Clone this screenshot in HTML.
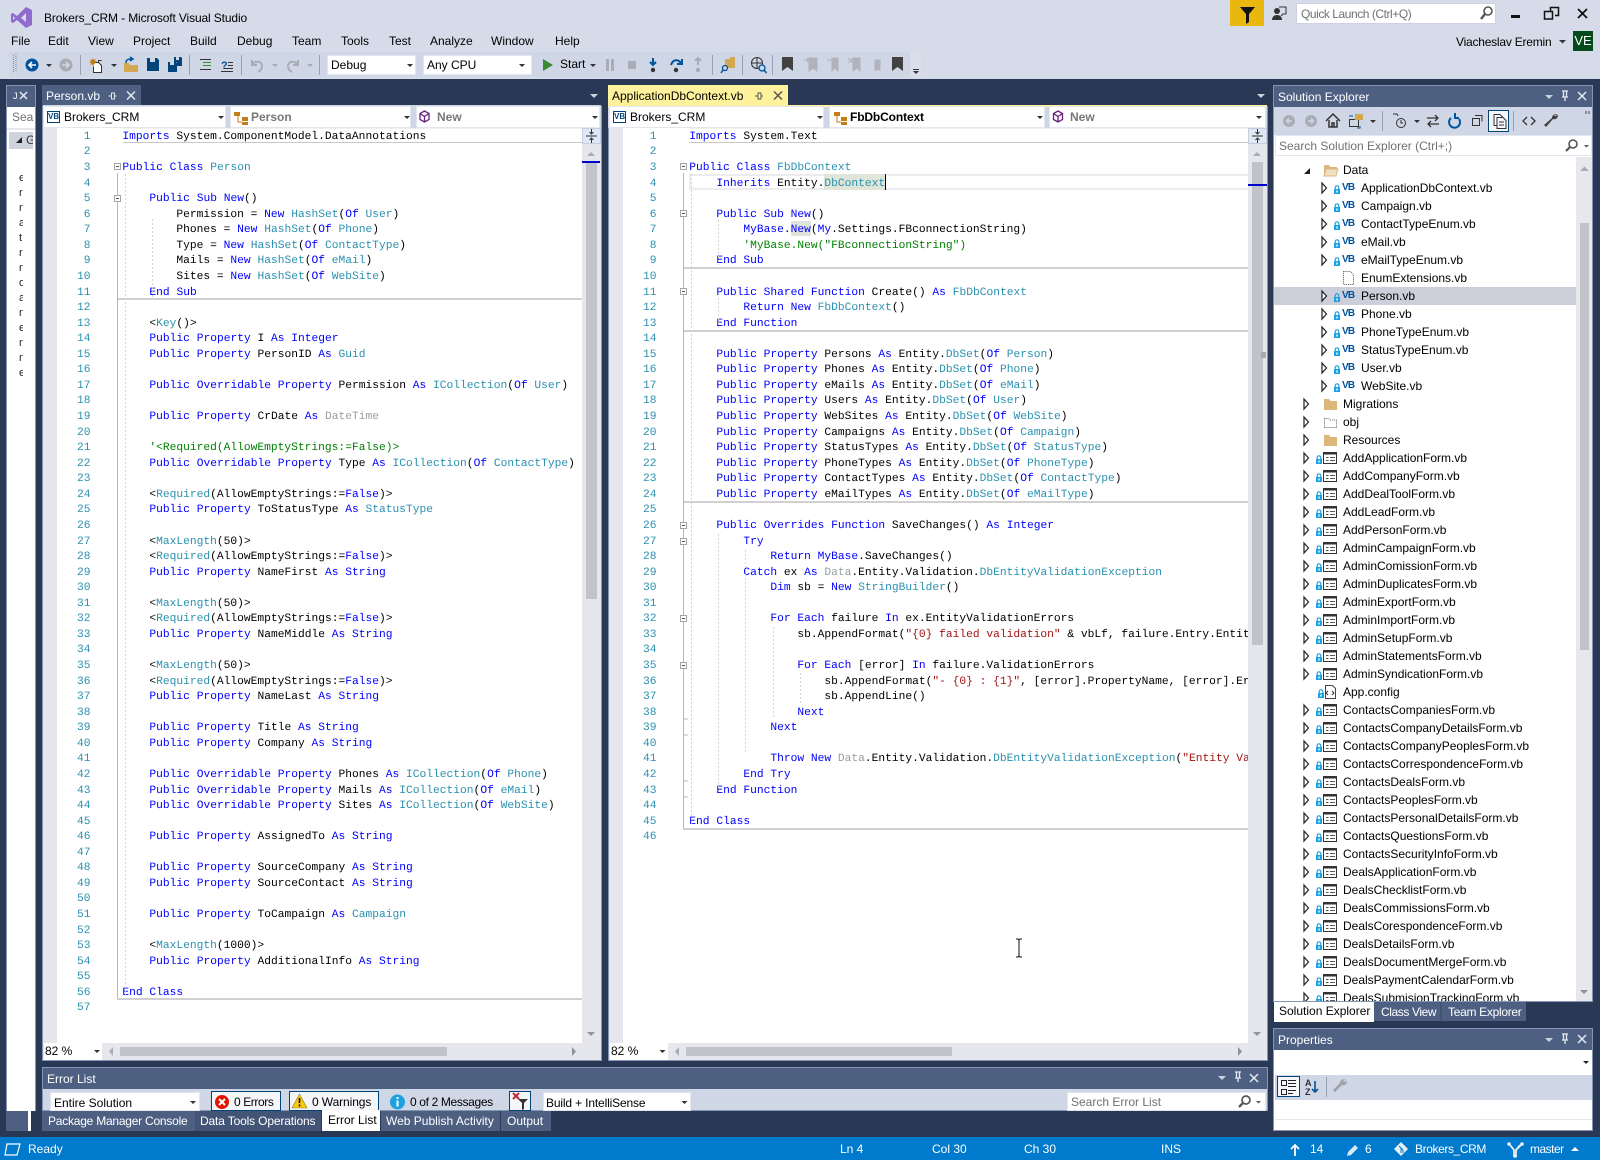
<!DOCTYPE html>
<html lang="en"><head><meta charset="utf-8"><title>Brokers_CRM - Microsoft Visual Studio</title>
<style>
*{box-sizing:border-box}
html,body{margin:0;padding:0;width:1600px;height:1160px;overflow:hidden;background:#293955;font:12px/16px "Liberation Sans",sans-serif;color:#000}
.a{position:absolute}
.t{position:absolute;white-space:nowrap;height:16px;line-height:16px}
.w{color:#fff}
.g{color:#717171}
.c{position:absolute;margin:0;font:11.25px/15.57px "Liberation Mono",monospace;color:#000;white-space:pre;overflow:hidden;text-rendering:geometricPrecision}
.c b{font-weight:normal;color:#00f}
.c i{font-style:normal;color:#2b91af}
.c s{text-decoration:none;color:#a31515}
.c u{text-decoration:none;color:#9aa0a0}
.c em{font-style:normal;color:#008000}
.n{color:#2b91af;text-align:right}
.dd{position:absolute;background:#fff;border:1px solid #e3e6ef}
.r{height:18px;line-height:18px;position:relative;white-space:nowrap}
.r svg{position:absolute;left:0;top:0}
.r1{padding-left:69px}
.r2{padding-left:87px}
.vb{position:absolute;left:68px;top:0;font:bold 10px/18px "Liberation Sans",sans-serif;color:#00539c;letter-spacing:-.8px}
.box{position:absolute;background:#fff;border:1px solid #00447a;font:bold 8px/10px "Liberation Sans",sans-serif;color:#00447a;text-align:center}
</style></head><body>

<!-- chrome -->
<div class="a" style="left:0;top:0;width:1600px;height:79px;background:#d6dbe9"></div>
<div class="a" style="left:9px;top:52px;width:901px;height:25px;background:#cfd6e5"></div>
<div class="a" style="left:910px;top:52px;width:11px;height:25px;background:#d9deea"></div>
<div class="a" style="left:1230px;top:0;width:34px;height:26px;background:#e8b80e"></div>
<div class="a" style="left:1296px;top:3px;width:200px;height:21px;background:#fff;border:1px solid #ccd2e0"></div>
<div class="a" style="left:1573px;top:31px;width:20px;height:20px;background:#054a1d;color:#fff;font-size:13px;line-height:20px;text-align:center">VE</div>

<span class="t" style="left:44px;top:10px;letter-spacing:-.13px">Brokers_CRM - Microsoft Visual Studio</span>
<span class="t" style="left:11px;top:33px">File</span>
<span class="t" style="left:48px;top:33px">Edit</span>
<span class="t" style="left:88px;top:33px">View</span>
<span class="t" style="left:133px;top:33px">Project</span>
<span class="t" style="left:190px;top:33px">Build</span>
<span class="t" style="left:237px;top:33px">Debug</span>
<span class="t" style="left:292px;top:33px">Team</span>
<span class="t" style="left:341px;top:33px">Tools</span>
<span class="t" style="left:389px;top:33px">Test</span>
<span class="t" style="left:430px;top:33px">Analyze</span>
<span class="t" style="left:491px;top:33px">Window</span>
<span class="t" style="left:555px;top:33px">Help</span>
<span class="t g" style="left:1301px;top:6px;letter-spacing:-.45px">Quick Launch (Ctrl+Q)</span>
<span class="t" style="left:1456px;top:34px;letter-spacing:-.22px">Viacheslav Eremin</span>

<div class="dd" style="left:327px;top:55px;width:89px;height:20px"></div>
<span class="t" style="left:331px;top:57px">Debug</span>
<div class="dd" style="left:423px;top:55px;width:109px;height:20px"></div>
<span class="t" style="left:427px;top:57px">Any CPU</span>
<span class="t" style="left:560px;top:56px">Start</span>

<!-- left tool window -->
<div class="a" style="left:6px;top:85px;width:30px;height:1026px;background:#fff;border:1px solid #8496b5;border-bottom:0"></div>
<div class="a" style="left:7px;top:86px;width:28px;height:21px;background:#4d6082"></div>
<span class="t w" style="left:13px;top:88px;font-size:9px">J</span>
<div class="a" style="left:8px;top:107px;width:26px;height:21px;background:#fff;overflow:hidden;white-space:nowrap;color:#717171;line-height:21px;padding-left:4px">Search</div>
<div class="a" style="left:7px;top:128px;width:28px;height:2px;background:#e6e7ed"></div>
<div class="a" style="left:9px;top:132px;width:24px;height:17px;background:#cfd3de;overflow:hidden;line-height:17px;padding-left:17px;color:#333">G</div>
<pre class="a" style="left:19px;top:171px;width:4px;height:210px;margin:0;overflow:hidden;font:11px/15px 'Liberation Sans',sans-serif;color:#222">e
r
n
a
t
r
n
o
a
n
e
n
n
e</pre>
<div class="a" style="left:6px;top:1111px;width:22px;height:20px;background:#4d6082"></div>
<div class="a" style="left:28px;top:1111px;width:3px;height:20px;background:#fff"></div>

<!-- left editor -->
<div class="a" style="left:42px;top:106px;width:560px;height:955px;background:#e6e7ed;border:1px solid #8496b5;border-top:0"></div>
<div class="a" style="left:42px;top:85px;width:99px;height:21px;background:#4d6082"></div>
<span class="t w" style="left:46px;top:88px">Person.vb</span>
<div class="a" style="left:43px;top:105px;width:558px;height:23px;background:#cfd6e5"></div>
<div class="dd" style="left:43px;top:106px;width:183px;height:22px"></div>
<div class="dd" style="left:230px;top:106px;width:181px;height:22px"></div>
<div class="dd" style="left:416px;top:106px;width:184px;height:22px"></div>
<div class="box" style="left:47px;top:111px;width:13px;height:12px">VB</div>
<span class="t" style="left:64px;top:109px">Brokers_CRM</span>
<span class="t" style="left:251px;top:109px;color:#777;font-weight:bold">Person</span>
<span class="t" style="left:437px;top:109px;color:#777;font-weight:bold">New</span>
<div class="a" style="left:57px;top:128px;width:525px;height:915px;background:#fff"></div>
<div class="a" style="left:123px;top:128px;width:459px;height:15px;border-bottom:1px solid #c8c8c8;border-top:1px solid #f0f0f0"></div>
<div class="a" style="left:117px;top:298px;width:465px;height:2px;background:#d0d0d0"></div>
<div class="a" style="left:117px;top:998px;width:465px;height:2px;background:#d0d0d0"></div>
<div class="dd" style="left:44px;top:1043px;width:58px;height:17px;border:0;line-height:17px;padding-left:1px">82 %</div>
<div class="a" style="left:120px;top:1047px;width:327px;height:9px;background:#c2c3c9"></div>
<div class="a" style="left:586px;top:163px;width:11px;height:436px;background:#c2c3c9"></div>
<div class="a" style="left:582px;top:128px;width:19px;height:16px;background:#e1e8f5;border:1px solid #c5cddf"></div>
<div class="a" style="left:582px;top:161px;width:18px;height:2px;background:#0000c8"></div>

<pre class="c n" style="left:60px;top:129.9px;width:30.5px;height:900px">1
2
3
4
5
6
7
8
9
10
11
12
13
14
15
16
17
18
19
20
21
22
23
24
25
26
27
28
29
30
31
32
33
34
35
36
37
38
39
40
41
42
43
44
45
46
47
48
49
50
51
52
53
54
55
56
57</pre>
<pre class="c" style="left:122.4px;top:129.9px;width:459px;height:900px"><b>Imports</b> System.ComponentModel.DataAnnotations

<b>Public</b> <b>Class</b> <i>Person</i>

    <b>Public</b> <b>Sub</b> <b>New</b>()
        Permission = <b>New</b> <i>HashSet</i>(<b>Of</b> <i>User</i>)
        Phones = <b>New</b> <i>HashSet</i>(<b>Of</b> <i>Phone</i>)
        Type = <b>New</b> <i>HashSet</i>(<b>Of</b> <i>ContactType</i>)
        Mails = <b>New</b> <i>HashSet</i>(<b>Of</b> <i>eMail</i>)
        Sites = <b>New</b> <i>HashSet</i>(<b>Of</b> <i>WebSite</i>)
    <b>End</b> <b>Sub</b>

    &lt;<i>Key</i>()&gt;
    <b>Public</b> <b>Property</b> I <b>As</b> <b>Integer</b>
    <b>Public</b> <b>Property</b> PersonID <b>As</b> <i>Guid</i>

    <b>Public</b> <b>Overridable</b> <b>Property</b> Permission <b>As</b> <i>ICollection</i>(<b>Of</b> <i>User</i>)

    <b>Public</b> <b>Property</b> CrDate <b>As</b> <u>DateTime</u>

    <em>'&lt;Required(AllowEmptyStrings:=False)&gt;</em>
    <b>Public</b> <b>Overridable</b> <b>Property</b> Type <b>As</b> <i>ICollection</i>(<b>Of</b> <i>ContactType</i>)

    &lt;<i>Required</i>(AllowEmptyStrings:=<b>False</b>)&gt;
    <b>Public</b> <b>Property</b> ToStatusType <b>As</b> <i>StatusType</i>

    &lt;<i>MaxLength</i>(50)&gt;
    &lt;<i>Required</i>(AllowEmptyStrings:=<b>False</b>)&gt;
    <b>Public</b> <b>Property</b> NameFirst <b>As</b> <b>String</b>

    &lt;<i>MaxLength</i>(50)&gt;
    &lt;<i>Required</i>(AllowEmptyStrings:=<b>False</b>)&gt;
    <b>Public</b> <b>Property</b> NameMiddle <b>As</b> <b>String</b>

    &lt;<i>MaxLength</i>(50)&gt;
    &lt;<i>Required</i>(AllowEmptyStrings:=<b>False</b>)&gt;
    <b>Public</b> <b>Property</b> NameLast <b>As</b> <b>String</b>

    <b>Public</b> <b>Property</b> Title <b>As</b> <b>String</b>
    <b>Public</b> <b>Property</b> Company <b>As</b> <b>String</b>

    <b>Public</b> <b>Overridable</b> <b>Property</b> Phones <b>As</b> <i>ICollection</i>(<b>Of</b> <i>Phone</i>)
    <b>Public</b> <b>Overridable</b> <b>Property</b> Mails <b>As</b> <i>ICollection</i>(<b>Of</b> <i>eMail</i>)
    <b>Public</b> <b>Overridable</b> <b>Property</b> Sites <b>As</b> <i>ICollection</i>(<b>Of</b> <i>WebSite</i>)

    <b>Public</b> <b>Property</b> AssignedTo <b>As</b> <b>String</b>

    <b>Public</b> <b>Property</b> SourceCompany <b>As</b> <b>String</b>
    <b>Public</b> <b>Property</b> SourceContact <b>As</b> <b>String</b>

    <b>Public</b> <b>Property</b> ToCampaign <b>As</b> <i>Campaign</i>

    &lt;<i>MaxLength</i>(1000)&gt;
    <b>Public</b> <b>Property</b> AdditionalInfo <b>As</b> <b>String</b>

<b>End</b> <b>Class</b>
</pre>

<!-- right editor -->
<div class="a" style="left:608px;top:106px;width:660px;height:955px;background:#e6e7ed;border:1px solid #8496b5;border-top:0"></div>
<div class="a" style="left:608px;top:85px;width:180px;height:20px;background:#fff29d"></div>
<span class="t" style="left:612px;top:88px">ApplicationDbContext.vb</span>
<div class="a" style="left:608px;top:105px;width:659px;height:23px;background:#cfd6e5;border-top:2px solid #fff29d"></div>
<div class="dd" style="left:609px;top:106px;width:215px;height:22px"></div>
<div class="dd" style="left:829px;top:106px;width:216px;height:22px"></div>
<div class="dd" style="left:1049px;top:106px;width:217px;height:22px"></div>
<div class="box" style="left:613px;top:111px;width:13px;height:12px">VB</div>
<span class="t" style="left:630px;top:109px">Brokers_CRM</span>
<span class="t" style="left:850px;top:109px;font-weight:bold;letter-spacing:-.13px">FbDbContext</span>
<span class="t" style="left:1070px;top:109px;color:#777;font-weight:bold">New</span>
<div class="a" style="left:623px;top:128px;width:625px;height:915px;background:#fff"></div>
<div class="a" style="left:689px;top:128px;width:559px;height:15px;border-bottom:1px solid #c8c8c8;border-top:1px solid #f0f0f0"></div>
<div class="a" style="left:689px;top:174px;width:559px;height:16px;border:2px solid #ececf0;border-right:0"></div>
<div class="a" style="left:824px;top:174px;width:61px;height:15.6px;background:#dfe5d8"></div>
<div class="a" style="left:790.5px;top:220.6px;width:20.5px;height:15.6px;background:#dfe5d8"></div>
<div class="a" style="left:885px;top:174px;width:1px;height:16px;background:#000"></div>
<div class="a" style="left:683px;top:267px;width:565px;height:2px;background:#d0d0d0"></div>
<div class="a" style="left:683px;top:330px;width:565px;height:2px;background:#d0d0d0"></div>
<div class="a" style="left:683px;top:501px;width:565px;height:2px;background:#d0d0d0"></div>
<div class="a" style="left:683px;top:828px;width:565px;height:2px;background:#d0d0d0"></div>
<div class="dd" style="left:610px;top:1043px;width:58px;height:17px;border:0;line-height:17px;padding-left:1px">82 %</div>
<div class="a" style="left:686px;top:1047px;width:266px;height:9px;background:#c2c3c9"></div>
<div class="a" style="left:1252px;top:162px;width:11px;height:483px;background:#c2c3c9"></div>
<div class="a" style="left:1248px;top:128px;width:19px;height:16px;background:#e1e8f5;border:1px solid #c5cddf"></div>
<div class="a" style="left:1248px;top:184px;width:19px;height:2px;background:#0000c8"></div>
<div class="a" style="left:1261px;top:352px;width:5px;height:6px;background:#a8a8ae"></div>

<pre class="c n" style="left:626px;top:129.9px;width:30.5px;height:730px">1
2
3
4
5
6
7
8
9
10
11
12
13
14
15
16
17
18
19
20
21
22
23
24
25
26
27
28
29
30
31
32
33
34
35
36
37
38
39
40
41
42
43
44
45
46</pre>
<pre class="c" style="left:689.3px;top:129.9px;width:558.7px;height:730px"><b>Imports</b> System.Text

<b>Public</b> <b>Class</b> <i>FbDbContext</i>
    <b>Inherits</b> Entity.<i>DbContext</i>

    <b>Public</b> <b>Sub</b> <b>New</b>()
        <b>MyBase</b>.<b>New</b>(<b>My</b>.Settings.FBconnectionString)
        <em>'MyBase.New("FBconnectionString")</em>
    <b>End</b> <b>Sub</b>

    <b>Public</b> <b>Shared</b> <b>Function</b> Create() <b>As</b> <i>FbDbContext</i>
        <b>Return</b> <b>New</b> <i>FbDbContext</i>()
    <b>End</b> <b>Function</b>

    <b>Public</b> <b>Property</b> Persons <b>As</b> Entity.<i>DbSet</i>(<b>Of</b> <i>Person</i>)
    <b>Public</b> <b>Property</b> Phones <b>As</b> Entity.<i>DbSet</i>(<b>Of</b> <i>Phone</i>)
    <b>Public</b> <b>Property</b> eMails <b>As</b> Entity.<i>DbSet</i>(<b>Of</b> <i>eMail</i>)
    <b>Public</b> <b>Property</b> Users <b>As</b> Entity.<i>DbSet</i>(<b>Of</b> <i>User</i>)
    <b>Public</b> <b>Property</b> WebSites <b>As</b> Entity.<i>DbSet</i>(<b>Of</b> <i>WebSite</i>)
    <b>Public</b> <b>Property</b> Campaigns <b>As</b> Entity.<i>DbSet</i>(<b>Of</b> <i>Campaign</i>)
    <b>Public</b> <b>Property</b> StatusTypes <b>As</b> Entity.<i>DbSet</i>(<b>Of</b> <i>StatusType</i>)
    <b>Public</b> <b>Property</b> PhoneTypes <b>As</b> Entity.<i>DbSet</i>(<b>Of</b> <i>PhoneType</i>)
    <b>Public</b> <b>Property</b> ContactTypes <b>As</b> Entity.<i>DbSet</i>(<b>Of</b> <i>ContactType</i>)
    <b>Public</b> <b>Property</b> eMailTypes <b>As</b> Entity.<i>DbSet</i>(<b>Of</b> <i>eMailType</i>)

    <b>Public</b> <b>Overrides</b> <b>Function</b> SaveChanges() <b>As</b> <b>Integer</b>
        <b>Try</b>
            <b>Return</b> <b>MyBase</b>.SaveChanges()
        <b>Catch</b> ex <b>As</b> <u>Data</u>.Entity.Validation.<i>DbEntityValidationException</i>
            <b>Dim</b> sb = <b>New</b> <i>StringBuilder</i>()

            <b>For</b> <b>Each</b> failure <b>In</b> ex.EntityValidationErrors
                sb.AppendFormat(<s>"{0} failed validation"</s> &amp; vbLf, failure.Entry.Entity.GetType().Name)

                <b>For</b> <b>Each</b> [error] <b>In</b> failure.ValidationErrors
                    sb.AppendFormat(<s>"- {0} : {1}"</s>, [error].PropertyName, [error].ErrorMessage)
                    sb.AppendLine()
                <b>Next</b>
            <b>Next</b>

            <b>Throw</b> <b>New</b> <u>Data</u>.Entity.Validation.<i>DbEntityValidationException</i>(<s>"Entity Validation Failed"</s>)
        <b>End</b> <b>Try</b>
    <b>End</b> <b>Function</b>

<b>End</b> <b>Class</b>
</pre>

<!-- solution explorer -->
<div class="a" style="left:1273px;top:85px;width:320px;height:917px;background:#fff;border:1px solid #8496b5"></div>
<div class="a" style="left:1274px;top:86px;width:318px;height:21px;background:#4d6082"></div>
<span class="t w" style="left:1278px;top:89px">Solution Explorer</span>
<div class="a" style="left:1274px;top:107px;width:318px;height:28px;background:#cfd6e5"></div>
<div class="a" style="left:1488px;top:110px;width:21px;height:22px;background:#f5f6fa;border:1px solid #00447a"></div>
<div class="a" style="left:1275px;top:135px;width:317px;height:21px;background:#fff;border:1px solid #e3e6ef"></div>
<span class="t g" style="left:1279px;top:138px">Search Solution Explorer (Ctrl+;)</span>
<div class="a" style="left:1274px;top:287px;width:302px;height:18px;background:#ccced9"></div>
<div class="a" style="left:1576px;top:157px;width:16px;height:844px;background:#e8e8ec"></div>
<div class="a" style="left:1580px;top:223px;width:9px;height:427px;background:#c2c3c9"></div>

<svg width="0" height="0" style="position:absolute">
<defs>
<path id="ar" d="M0 0l4.5 5L0 10z" fill="#fff" stroke="#222" stroke-width="1.2"/>
<g id="lk"><path d="M1.2 4V2.6a1.8 1.8 0 0 1 3.6 0V4" fill="none" stroke="#1ba1e2" stroke-width="1.2"/><rect x="0" y="4" width="6" height="5" fill="#1ba1e2"/><rect x="2.3" y="5.5" width="1.4" height="2" fill="#fff"/></g>
<g id="a2"><use href="#ar" x="48" y="4"/><use href="#lk" x="60" y="6"/></g>
<g id="a1"><use href="#ar" x="30" y="4"/><use href="#lk" x="42" y="6"/><rect x="49.5" y="3.5" width="13" height="11" fill="#fff" stroke="#333"/><rect x="49.5" y="3.5" width="13" height="2" fill="#333"/><path d="M52 8.5h2.5M56 8.5h5M52 11.5h2.5M56 11.5h5" stroke="#555"/></g>
<g id="fo"><path d="M50 4h5l1.5 2H63v9H50z" fill="#dcb67a"/></g>
</defs></svg>

<div class="a" style="left:1274px;top:161px;width:302px;height:840px;overflow:hidden">
<div class="r r1"><svg width="90" height="18"><path d="M30 13l6-6v6z" fill="#222"/><path d="M50 4h5l1.5 2H63v2H52l-2 6z" fill="#dcb67a"/><path d="M52 8h12l-2 7H50z" fill="#efe0c4" stroke="#dcb67a"/></svg>Data</div>
<div class="r r2"><svg width="90" height="18"><use href="#a2"/></svg><b class="vb">VB</b>ApplicationDbContext.vb</div>
<div class="r r2"><svg width="90" height="18"><use href="#a2"/></svg><b class="vb">VB</b>Campaign.vb</div>
<div class="r r2"><svg width="90" height="18"><use href="#a2"/></svg><b class="vb">VB</b>ContactTypeEnum.vb</div>
<div class="r r2"><svg width="90" height="18"><use href="#a2"/></svg><b class="vb">VB</b>eMail.vb</div>
<div class="r r2"><svg width="90" height="18"><use href="#a2"/></svg><b class="vb">VB</b>eMailTypeEnum.vb</div>
<div class="r r2"><svg width="90" height="18"><path d="M69.5 2.5h7l3 3v10h-10z" fill="#fff" stroke="#555" stroke-dasharray="1 1"/></svg>EnumExtensions.vb</div>
<div class="r r2"><svg width="90" height="18"><use href="#a2"/></svg><b class="vb">VB</b>Person.vb</div>
<div class="r r2"><svg width="90" height="18"><use href="#a2"/></svg><b class="vb">VB</b>Phone.vb</div>
<div class="r r2"><svg width="90" height="18"><use href="#a2"/></svg><b class="vb">VB</b>PhoneTypeEnum.vb</div>
<div class="r r2"><svg width="90" height="18"><use href="#a2"/></svg><b class="vb">VB</b>StatusTypeEnum.vb</div>
<div class="r r2"><svg width="90" height="18"><use href="#a2"/></svg><b class="vb">VB</b>User.vb</div>
<div class="r r2"><svg width="90" height="18"><use href="#a2"/></svg><b class="vb">VB</b>WebSite.vb</div>
<div class="r r1"><svg width="90" height="18"><use href="#ar" x="30" y="4"/><use href="#fo"/></svg>Migrations</div>
<div class="r r1"><svg width="90" height="18"><use href="#ar" x="30" y="4"/><path d="M50.5 5.5h4l1.500 1.500h6.500v7.500h-12z" fill="#fff" stroke="#666" stroke-dasharray="1 1"/></svg>obj</div>
<div class="r r1"><svg width="90" height="18"><use href="#ar" x="30" y="4"/><use href="#fo"/></svg>Resources</div>
<div class="r r1"><svg width="90" height="18"><use href="#a1"/></svg>AddApplicationForm.vb</div>
<div class="r r1"><svg width="90" height="18"><use href="#a1"/></svg>AddCompanyForm.vb</div>
<div class="r r1"><svg width="90" height="18"><use href="#a1"/></svg>AddDealToolForm.vb</div>
<div class="r r1"><svg width="90" height="18"><use href="#a1"/></svg>AddLeadForm.vb</div>
<div class="r r1"><svg width="90" height="18"><use href="#a1"/></svg>AddPersonForm.vb</div>
<div class="r r1"><svg width="90" height="18"><use href="#a1"/></svg>AdminCampaignForm.vb</div>
<div class="r r1"><svg width="90" height="18"><use href="#a1"/></svg>AdminComissionForm.vb</div>
<div class="r r1"><svg width="90" height="18"><use href="#a1"/></svg>AdminDuplicatesForm.vb</div>
<div class="r r1"><svg width="90" height="18"><use href="#a1"/></svg>AdminExportForm.vb</div>
<div class="r r1"><svg width="90" height="18"><use href="#a1"/></svg>AdminImportForm.vb</div>
<div class="r r1"><svg width="90" height="18"><use href="#a1"/></svg>AdminSetupForm.vb</div>
<div class="r r1"><svg width="90" height="18"><use href="#a1"/></svg>AdminStatementsForm.vb</div>
<div class="r r1"><svg width="90" height="18"><use href="#a1"/></svg>AdminSyndicationForm.vb</div>
<div class="r r1"><svg width="90" height="18"><use href="#lk" x="44" y="6"/><path d="M51.500 2.500h7l3 3v10h-10z" fill="#fff" stroke="#444"/><path d="M54 8l-2 2 2 2M58 8l2 2-2 2" fill="none" stroke="#333"/></svg>App.config</div>
<div class="r r1"><svg width="90" height="18"><use href="#a1"/></svg>ContactsCompaniesForm.vb</div>
<div class="r r1"><svg width="90" height="18"><use href="#a1"/></svg>ContactsCompanyDetailsForm.vb</div>
<div class="r r1"><svg width="90" height="18"><use href="#a1"/></svg>ContactsCompanyPeoplesForm.vb</div>
<div class="r r1"><svg width="90" height="18"><use href="#a1"/></svg>ContactsCorrespondenceForm.vb</div>
<div class="r r1"><svg width="90" height="18"><use href="#a1"/></svg>ContactsDealsForm.vb</div>
<div class="r r1"><svg width="90" height="18"><use href="#a1"/></svg>ContactsPeoplesForm.vb</div>
<div class="r r1"><svg width="90" height="18"><use href="#a1"/></svg>ContactsPersonalDetailsForm.vb</div>
<div class="r r1"><svg width="90" height="18"><use href="#a1"/></svg>ContactsQuestionsForm.vb</div>
<div class="r r1"><svg width="90" height="18"><use href="#a1"/></svg>ContactsSecurityInfoForm.vb</div>
<div class="r r1"><svg width="90" height="18"><use href="#a1"/></svg>DealsApplicationForm.vb</div>
<div class="r r1"><svg width="90" height="18"><use href="#a1"/></svg>DealsChecklistForm.vb</div>
<div class="r r1"><svg width="90" height="18"><use href="#a1"/></svg>DealsCommissionsForm.vb</div>
<div class="r r1"><svg width="90" height="18"><use href="#a1"/></svg>DealsCorespondenceForm.vb</div>
<div class="r r1"><svg width="90" height="18"><use href="#a1"/></svg>DealsDetailsForm.vb</div>
<div class="r r1"><svg width="90" height="18"><use href="#a1"/></svg>DealsDocumentMergeForm.vb</div>
<div class="r r1"><svg width="90" height="18"><use href="#a1"/></svg>DealsPaymentCalendarForm.vb</div>
<div class="r r1"><svg width="90" height="18"><use href="#a1"/></svg>DealsSubmisionTrackingForm.vb</div>
</div>

<div class="a" style="left:1274px;top:1002px;width:100px;height:20px;background:#fff"></div>
<div class="a" style="left:1374px;top:1002px;width:152px;height:19px;background:#4d6082"></div>
<div class="a" style="left:1440px;top:1002px;width:2px;height:19px;background:#435577"></div>
<span class="t" style="left:1279px;top:1003px">Solution Explorer</span>
<span class="t w" style="left:1381px;top:1004px;letter-spacing:-.4px">Class View</span>
<span class="t w" style="left:1448px;top:1004px;letter-spacing:-.3px">Team Explorer</span>

<!-- properties -->
<div class="a" style="left:1273px;top:1028px;width:320px;height:103px;background:#fff;border:1px solid #8496b5"></div>
<div class="a" style="left:1274px;top:1029px;width:318px;height:21px;background:#4d6082"></div>
<span class="t w" style="left:1278px;top:1032px">Properties</span>
<div class="a" style="left:1275px;top:1075px;width:317px;height:25px;background:#cfd6e5"></div>
<div class="a" style="left:1277px;top:1076px;width:23px;height:21px;background:#f5f6fa;border:1px solid #00447a"></div>
<div class="a" style="left:1275px;top:1119px;width:317px;height:1px;background:#e6e7ed"></div>

<!-- error list -->
<div class="a" style="left:42px;top:1067px;width:1226px;height:44px;background:#cfd6e5;border:1px solid #8496b5"></div>
<div class="a" style="left:43px;top:1068px;width:1224px;height:21px;background:#4d6082"></div>
<span class="t w" style="left:47px;top:1071px">Error List</span>
<div class="dd" style="left:50px;top:1092px;width:150px;height:19px"></div>
<span class="t" style="left:54px;top:1095px">Entire Solution</span>
<div class="a" style="left:211px;top:1091px;width:70px;height:20px;background:#f5f6fa;border:1px solid #00447a"></div>
<span class="t" style="left:234px;top:1094px;letter-spacing:-.4px">0 Errors</span>
<div class="a" style="left:289px;top:1091px;width:90px;height:20px;background:#f5f6fa;border:1px solid #00447a"></div>
<span class="t" style="left:312px;top:1094px;letter-spacing:-.1px">0 Warnings</span>
<span class="t" style="left:410px;top:1094px;letter-spacing:-.35px">0 of 2 Messages</span>
<div class="a" style="left:509px;top:1091px;width:22px;height:20px;background:#f5f6fa;border:1px solid #00447a"></div>
<div class="dd" style="left:543px;top:1092px;width:148px;height:19px"></div>
<span class="t" style="left:546px;top:1095px;letter-spacing:-.15px">Build + IntelliSense</span>
<div class="dd" style="left:1067px;top:1092px;width:199px;height:19px"></div>
<span class="t g" style="left:1071px;top:1094px">Search Error List</span>

<div class="a" style="left:42px;top:1111px;width:153px;height:20px;background:#4d6082"></div>
<div class="a" style="left:195px;top:1111px;width:126px;height:20px;background:#435577"></div>
<div class="a" style="left:322px;top:1110px;width:58px;height:21px;background:#fff"></div>
<div class="a" style="left:381px;top:1111px;width:119px;height:20px;background:#4d6082"></div>
<div class="a" style="left:501px;top:1111px;width:50px;height:20px;background:#4d6082"></div>
<span class="t w" style="left:48px;top:1113px;letter-spacing:-.23px">Package Manager Console</span>
<span class="t w" style="left:200px;top:1113px;letter-spacing:-.15px">Data Tools Operations</span>
<span class="t" style="left:328px;top:1112px">Error List</span>
<span class="t w" style="left:386px;top:1113px">Web Publish Activity</span>
<span class="t w" style="left:507px;top:1113px">Output</span>

<!-- status -->
<div class="a" style="left:0;top:1137px;width:1600px;height:23px;background:#007acc"></div>
<span class="t w" style="left:28px;top:1141px">Ready</span>
<span class="t w" style="left:840px;top:1141px">Ln 4</span>
<span class="t w" style="left:932px;top:1141px">Col 30</span>
<span class="t w" style="left:1024px;top:1141px">Ch 30</span>
<span class="t w" style="left:1161px;top:1141px">INS</span>
<span class="t w" style="left:1310px;top:1141px">14</span>
<span class="t w" style="left:1365px;top:1141px">6</span>
<span class="t w" style="left:1415px;top:1141px;letter-spacing:-.4px">Brokers_CRM</span>
<span class="t w" style="left:1530px;top:1141px;letter-spacing:-.5px">master</span>

<!-- icon layer -->
<svg class="a" style="left:0;top:0" width="1600" height="1160" viewBox="0 0 1600 1160">
<!-- VS logo -->
<path d="M26 7l6 3v15l-6 3-9-8-4 3-2-1V14l2-1 4 3z" fill="#8f6bcb"/><path d="M26 13l-5 5 5 4z" fill="#d6dbe9"/><path d="M13 16v4l2-2z" fill="#d6dbe9"/>
<!-- filter / feedback -->
<path d="M1240 7h15l-6 7v8l-3 2v-10z" fill="#111"/>
<circle cx="1277" cy="11" r="3" fill="#333"/><path d="M1272 20c0-3 2-5 5-5s5 2 5 5z" fill="#333"/><path d="M1279 7h7v7h-3l-2 2" fill="none" stroke="#333"/>
<!-- quick launch magnifier -->
<circle cx="1488" cy="11" r="4" fill="none" stroke="#555" stroke-width="1.6"/><path d="M1485 14l-4 5" stroke="#555" stroke-width="2.4"/>
<!-- window controls -->
<rect x="1511" y="15" width="9" height="3" fill="#111"/>
<path d="M1544.500 11.500h6v-4h8v8h-3.500M1544.500 11.500h8v7.500h-8z" fill="none" stroke="#111" stroke-width="1.500"/>
<path d="M1578 9l9 9M1587 9l-9 9" stroke="#111" stroke-width="1.800"/>
<path d="M1559 40h7l-3.500 3.500z" fill="#333"/>
<!-- toolbar grip -->
<path d="M13.500 55v18M16 54v18" stroke="#7b8499" stroke-width="1" stroke-dasharray="1 1"/>
<!-- back/forward -->
<circle cx="32" cy="65" r="6.500" fill="#00539c"/><path d="M36 65h-6M32 62l-3 3 3 3" stroke="#fff" stroke-width="1.600" fill="none"/>
<path d="M46 64h6l-3 3z" fill="#333"/>
<circle cx="66" cy="65" r="6.500" fill="#a9acb4"/><path d="M62 65h6M66 62l3 3-3 3" stroke="#cfd6e5" stroke-width="1.600" fill="none"/>
<g fill="#9aa2b1"><rect x="80" y="55" width="1" height="20"/><rect x="189" y="55" width="1" height="20"/><rect x="241" y="55" width="1" height="20"/><rect x="319" y="55" width="1" height="20"/><rect x="712" y="55" width="1" height="20"/><rect x="742" y="55" width="1" height="20"/><rect x="772" y="55" width="1" height="20"/></g>
<!-- new project -->
<path d="M93 58l1 2 2-1-1 2 2 1-2 1 1 2-2-1-1 2-1-2-2 1 1-2-2-1 2-1-1-2 2 1z" fill="#c27d1a"/>
<path d="M95.500 62.500h3l3 3v7h-8v-6" fill="#fff" stroke="#333"/><path d="M101.500 60.500h-3v2" fill="none" stroke="#333"/>
<path d="M111 64h6l-3 3z" fill="#333"/>
<!-- open -->
<path d="M124 63h5l1 2h8v7h-14z" fill="#d4a853"/><path d="M126 63c0-4 3-4 6-4M130 57l3 2-3 2" fill="none" stroke="#00539c" stroke-width="1.500"/>
<!-- save -->
<path d="M147 58h10l2 2v11h-12z" fill="#00447a"/><rect x="150" y="58" width="5" height="4" fill="#cfd6e5"/><rect x="149.500" y="65" width="7" height="6" fill="#00447a"/>
<path d="M168 62h8l1 1v9h-9z" fill="#00447a"/><rect x="170" y="62" width="4" height="3" fill="#cfd6e5"/>
<path d="M174 57h7l1 1v8h-5v-4h-3z" fill="#00447a"/><rect x="176" y="57" width="3" height="3" fill="#cfd6e5"/>
<!-- indent/comment -->
<path d="M200 59.500h11M200 69.500h11" stroke="#333"/><path d="M203 62.500h8M203 65.500h8" stroke="#388a34"/>
<text x="221" y="69" font-family="Liberation Sans,sans-serif" font-size="11" font-weight="bold" fill="#00539c">?</text>
<path d="M228 62.500h5M228 65.500h5M224 68.500h9M221 71.500h12" stroke="#333"/>
<!-- undo/redo -->
<path d="M252 60v5h5M252 65c3-5 10-4 10 1 0 3-2 5-4 6" fill="none" stroke="#a9acb4" stroke-width="2"/>
<path d="M272 64h6l-3 3z" fill="#a9acb4"/>
<path d="M298 60v5h-5M298 65c-3-5-10-4-10 1 0 3 2 5 4 6" fill="none" stroke="#a9acb4" stroke-width="2"/>
<path d="M307 64h6l-3 3z" fill="#a9acb4"/>
<!-- combo arrows -->
<path d="M407 64h6l-3 3zM519 64h6l-3 3zM590 64h6l-3 3z" fill="#333"/>
<!-- start/pause/stop -->
<path d="M543 59l10 6-10 6z" fill="#388a34"/>
<path d="M606 59h3v12h-3zM611 59h3v12h-3zM628 61h8v8h-8z" fill="#a9acb4"/>
<!-- step -->
<path d="M653 58v7M650 62l3 3 3-3" stroke="#00539c" stroke-width="2" fill="none"/><circle cx="653" cy="70" r="2.200" fill="#333"/>
<path d="M671 65c2-6 7-6 10-2M682 59v5h-5" stroke="#00539c" stroke-width="2" fill="none"/><circle cx="676" cy="70" r="2.200" fill="#333"/>
<path d="M698 65v-7M695 61l3-3 3 3" stroke="#a9acb4" stroke-width="2" fill="none"/><circle cx="698" cy="70" r="2.200" fill="#a9acb4"/>
<!-- find folder -->
<path d="M725 59h4l2-2h4v11h-10z" fill="#d4a853"/><circle cx="725" cy="68" r="2.500" fill="#cfd6e5" stroke="#00539c" stroke-width="1.300"/><path d="M723 70l-2 3" stroke="#00539c" stroke-width="1.500"/>
<!-- globe find -->
<circle cx="757" cy="63" r="5.500" fill="none" stroke="#333"/><path d="M751.500 63h11M757 57.500v11" stroke="#333"/><circle cx="762" cy="68" r="3" fill="#cfd6e5" stroke="#00539c" stroke-width="1.300"/><path d="M764 70l2.500 3" stroke="#00539c" stroke-width="1.500"/>
<!-- bookmarks -->
<path d="M782 57h11v14l-5.500-4-5.500 4z" fill="#424242"/>
<path d="M892 57h11v14l-5.500-4-5.500 4z" fill="#424242"/>
<path d="M809 58h8v13l-4-3-4 3zM804 60h5M807 58l2 2-2 2M832 58h6v13l-3-3-3 3zM827 60h5M853 58h7v13l-3-3-4 3zM848 58l5 5M853 58l-5 5M875 60h5v10h-5z" fill="#b0b3bb" stroke="#b0b3bb"/>
<path d="M913 69h6v1h-6zM913 71h6l-3 3z" fill="#333"/>
<!-- tab controls left -->
<g stroke="#e6e9f2" fill="none"><path d="M108.500 96h3M111.500 93v6h3v-6zM114.500 96h2"/><path d="M127 91.500l8 8M135 91.500l-8 8" stroke-width="1.500"/><path d="M20 92l7 7M27 92l-7 7" stroke-width="1.500"/></g>
<path d="M590 94h8l-4 4z" fill="#ccd2e0"/>
<path d="M1257 94h8l-4 4z" fill="#ccd2e0"/>
<g stroke="#555" fill="none"><path d="M755 96h3M758 93v6h3v-6zM761 96h2"/><path d="M774 91.500l8 8M782 91.500l-8 8" stroke-width="1.500"/></g>
<!-- G row triangle -->
<path d="M16 143l6-6v6z" fill="#222"/>
<!-- dropdown arrows row -->
<path d="M218 116h6l-3 3zM404 116h6l-3 3zM592 116h6l-3 3zM817 116h6l-3 3zM1037 116h6l-3 3zM1256 116h6l-3 3z" fill="#333"/>
<!-- navbar icons -->
<path d="M234 112h6v4h-6zM242 117h6v4h-6zM242 122h6v3h-6z" fill="#c27d1a"/><path d="M238 116v6h4" stroke="#c27d1a" fill="none"/>
<path d="M840 112h-6v4h6zM841 117h6v4h-6zM841 122h6v3h-6z" fill="#c27d1a"/><path d="M837 116v6h4" stroke="#c27d1a" fill="none"/>
<g fill="none" stroke="#68217a" stroke-width="1.300"><path d="M424.500 111l4.500 2.500v6l-4.500 2.500-4.500-2.500v-6zM424.500 116.500V122M420 113.500l4.500 3 4.500-3"/><path d="M1058 111l4.500 2.500v6l-4.500 2.500-4.500-2.500v-6zM1058 116.500V122M1053.500 113.500l4.500 3 4.500-3"/></g>
<!-- outlining left -->
<path d="M117.500 173v825" fill="none" stroke="#b8b8b8"/>
<path d="M125.500 174v822M152.500 219v78" stroke="#d4d4d4" stroke-dasharray="2 2" fill="none"/>
<g fill="#fff" stroke="#a5a5a5"><rect x="114.500" y="163.500" width="6" height="6"/><rect x="114.500" y="195.500" width="6" height="6"/></g>
<path d="M116 166.500h3M116 198.500h3" stroke="#555"/>
<!-- outlining right -->
<path d="M683.500 173v656" stroke="#b8b8b8" fill="none"/>
<path d="M691.500 174v652M718.500 220v45M718.500 298v31M718.500 534v254M745.500 550v204M773.500 627v92M800.500 673v32" stroke="#d4d4d4" stroke-dasharray="2 2" fill="none"/>
<g fill="#fff" stroke="#a5a5a5"><rect x="680.500" y="163.500" width="6" height="6"/><rect x="680.500" y="210.500" width="6" height="6"/><rect x="680.500" y="288.500" width="6" height="6"/><rect x="680.500" y="522.500" width="6" height="6"/><rect x="680.500" y="538.500" width="6" height="6"/><rect x="680.500" y="615.500" width="6" height="6"/><rect x="680.500" y="662.500" width="6" height="6"/></g>
<path d="M682 166.500h3M682 213.500h3M682 291.500h3M682 525.500h3M682 541.500h3M682 618.500h3M682 665.500h3" stroke="#555"/>
<path d="M683 719h5M683 735h5M683 781h5M683 797h5" stroke="#b8b8b8"/>
<!-- splitter icons -->
<path d="M586 136h11M591.500 129v5M589.500 132l2 2 2-2M591.500 143v-5M589.500 140l2-2 2 2" stroke="#333" fill="none"/>
<path d="M1252 136h11M1257.500 129v5M1255.500 132l2 2 2-2M1257.500 143v-5M1255.500 140l2-2 2 2" stroke="#333" fill="none"/>
<!-- scrollbar arrows -->
<path d="M587 156l4-4 4 4zM1253 156l4-4 4 4zM1580 171l4.500-4.500 4.500 4.500z" fill="#a9acb4"/>
<path d="M587 1032h8l-4 4zM1253 1032h8l-4 4zM1580 990h8l-4 4z" fill="#8f9299"/>
<path d="M94 1050h6l-3 3zM659.500 1050h6l-3 3z" fill="#333"/>
<path d="M113 1047v9l-4-4.500zM679 1047v9l-4-4.500z" fill="#a9acb4"/>
<path d="M572 1047v9l4-4.500zM1238 1047v9l4-4.500z" fill="#8f9299"/>
<!-- solution explorer toolbar -->
<g stroke="#e6e9f2" fill="none" stroke-width="1.300"><path d="M1545 95h8l-4 4z" fill="#ccd2e0" stroke="none"/><path d="M1562 91h6M1563.500 91v6h3v-6M1562 97h6M1565 97v4"/><path d="M1578 92l8 8M1586 92l-8 8" stroke-width="1.500"/></g>
<circle cx="1289" cy="121" r="6" fill="#a9acb4"/><path d="M1292 121h-5M1289 118.500l-2.500 2.500 2.500 2.500" stroke="#cfd6e5" stroke-width="1.400" fill="none"/>
<circle cx="1311" cy="121" r="6" fill="#a9acb4"/><path d="M1308 121h5M1311 118.500l2.500 2.500-2.500 2.500" stroke="#cfd6e5" stroke-width="1.400" fill="none"/>
<path d="M1326 121l7-7 7 7M1329 120v7h8v-7M1332 127v-4h2v4" fill="none" stroke="#333" stroke-width="1.500"/>
<rect x="1349.500" y="119.500" width="9" height="7" fill="none" stroke="#333"/><rect x="1355" y="114" width="8" height="6" fill="#d4a853"/><path d="M1349 116h4M1360 126v2h-3" stroke="#00539c" fill="none"/>
<path d="M1370 120h6l-3 3z" fill="#333"/>
<rect x="1382" y="111" width="1" height="20" fill="#9aa2b1"/><rect x="1513" y="111" width="1" height="20" fill="#9aa2b1"/>
<circle cx="1401" cy="123" r="4.500" fill="none" stroke="#333"/><path d="M1401 120v3h2M1393 114h4l1 2" stroke="#333" fill="none"/>
<path d="M1414 120h6l-3 3z" fill="#333"/>
<path d="M1427 118h11M1435 115l3 3-3 3M1439 124h-11M1431 121l-3 3 3 3" stroke="#333" stroke-width="1.300" fill="none"/>
<path d="M1451 118a5.500 5.500 0 1 0 8 1M1455 113v5h4" fill="none" stroke="#00539c" stroke-width="2"/>
<path d="M1475 115.500h7v6M1472.500 118.500h7v7h-7z" fill="none" stroke="#333"/>
<path d="M1494 114.500h6l3 3v8h-9z" fill="none" stroke="#333"/><path d="M1497 117.500h6l3 3v8h-9z" fill="#f5f6fa" stroke="#333"/><path d="M1499 122h5M1499 125h5" stroke="#333"/>
<path d="M1527 117l-4 4 4 4M1531 117l4 4-4 4" fill="none" stroke="#333" stroke-width="1.300"/>
<path d="M1558 115c-3-2-6 0-6 3l-8 7 2 2 7-8c3 1 5-1 5-4l-3 1-1-1z" fill="#424242"/>
<path d="M1586 111v3M1589 111v3" stroke="#444"/>
<circle cx="1573" cy="144" r="4" fill="none" stroke="#555" stroke-width="1.600"/><path d="M1570 147l-4 4" stroke="#555" stroke-width="2.200"/>
<path d="M1584 145h5l-2.500 2.500z" fill="#555"/>
<!-- properties -->
<path d="M1545 1038h8l-4 4z" fill="#ccd2e0"/>
<g stroke="#e6e9f2" fill="none" stroke-width="1.300"><path d="M1562 1034h6M1563.500 1034v6h3v-6M1562 1040h6M1565 1040v4"/><path d="M1578 1035l8 8M1586 1035l-8 8" stroke-width="1.500"/></g>
<path d="M1583 1061h6l-3 3z" fill="#222"/>
<rect x="1281.500" y="1080.500" width="5" height="5" fill="none" stroke="#222"/><rect x="1281.500" y="1089.500" width="5" height="5" fill="none" stroke="#222"/><path d="M1288 1080.500h8M1288 1083.500h8M1288 1086.500h8M1288 1090.500h8M1288 1093.500h5" stroke="#222"/>
<text x="1305" y="1086" font-family="Liberation Sans,sans-serif" font-size="9" font-weight="bold" fill="#333">A</text><text x="1305" y="1095" font-family="Liberation Sans,sans-serif" font-size="9" font-weight="bold" fill="#333">Z</text>
<path d="M1315 1081v11M1312 1089l3 3 3-3" stroke="#00539c" stroke-width="1.600" fill="none"/>
<rect x="1326" y="1077" width="1" height="20" fill="#9aa2b1"/>
<path d="M1346 1080c-3-2-6 0-6 3l-7 7 2 2 7-7c3 1 5-1 5-4l-3 1-1-1z" fill="#a0a3aa"/>
<!-- error list icons -->
<path d="M1218 1076h8l-4 4z" fill="#ccd2e0"/>
<g stroke="#e6e9f2" fill="none" stroke-width="1.300"><path d="M1235 1072h6M1236.500 1072v6h3v-6M1235 1078h6M1238 1078v4"/><path d="M1250 1074l8 8M1258 1074l-8 8" stroke-width="1.500"/></g>
<path d="M190 1101h6l-3 3zM681.500 1101h6l-3 3z" fill="#333"/>
<circle cx="222" cy="1102" r="7" fill="#e51400"/><path d="M219 1099l6 6M225 1099l-6 6" stroke="#fff" stroke-width="2"/>
<path d="M299.500 1094l7.500 14h-15z" fill="#f9c812" stroke="#9a7d10" stroke-width=".6"/><path d="M299.500 1098v5M299.500 1104.500v2" stroke="#111" stroke-width="1.600"/>
<circle cx="397.500" cy="1102" r="7.500" fill="#1ba1e2"/><path d="M397.500 1100.500v6M397.500 1097v2" stroke="#fff" stroke-width="2"/>
<path d="M513 1093l6 6M519 1093l-6 6" stroke="#c1272d" stroke-width="2"/><path d="M518 1099h10l-4 4v6l-2 1v-7z" fill="#333"/>
<circle cx="1246" cy="1100" r="4" fill="none" stroke="#555" stroke-width="1.700"/><path d="M1243 1103l-4 4" stroke="#555" stroke-width="2.300"/>
<path d="M1256 1101h5l-2.500 2.500z" fill="#555"/>
<!-- status icons -->
<path d="M7 1144h13l-3 11H5z" fill="none" stroke="#fff" stroke-width="1.200"/>
<path d="M1295 1156v-11M1291 1149l4-4 4 4" stroke="#fff" stroke-width="1.800" fill="none"/>
<path d="M1347 1156l1-4 7-7 3 3-7 7z" fill="#d8e8f4"/>
<path d="M1401 1142l7 7-7 7-7-7z" fill="#e8f0f8"/><path d="M1399 1146l4 4v3M1401 1148v5" stroke="#007acc" fill="none"/>
<path d="M1510 1145l4 5v6h2v-6l4-5M1516 1150l5-5" stroke="#e8f0f8" stroke-width="1.800" fill="none"/><circle cx="1509" cy="1144" r="1.800" fill="#e8f0f8"/><circle cx="1522" cy="1144" r="1.800" fill="#e8f0f8"/><circle cx="1515" cy="1156" r="1.800" fill="#e8f0f8"/>
<path d="M1571 1151l4-4 4 4z" fill="#fff"/>
<!-- I-beam -->
<path d="M1016 939h2l1 1 1-1h2M1019 940v16M1016 957h2l1-1 1 1h2" stroke="#111" fill="none"/>
</svg>
</body></html>
